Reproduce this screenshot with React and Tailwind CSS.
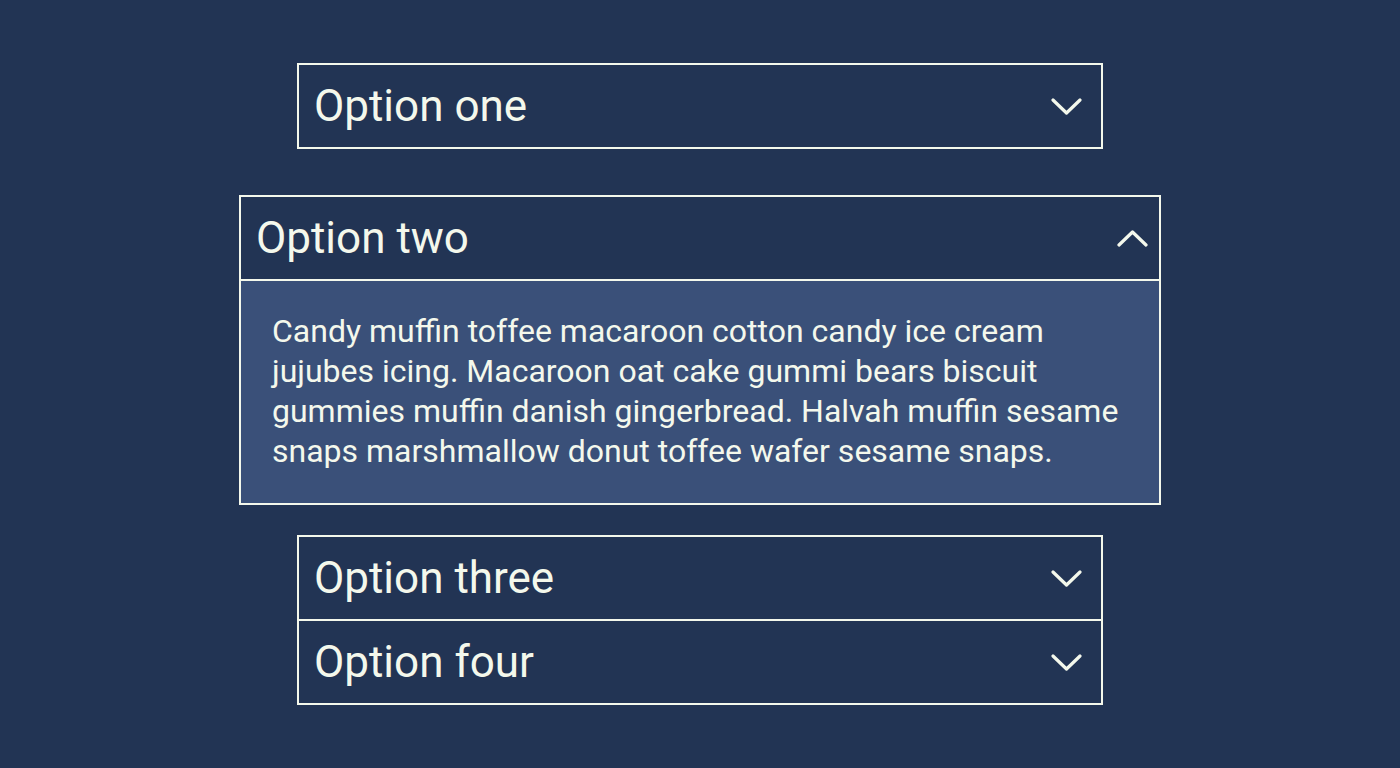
import { useState } from 'react';

// Accordion demo: four items, the second one open and wider than the rest
const ITEMS = [
  { id: 1, title: 'Option one' },
  {
    id: 2,
    title: 'Option two',
    body: 'Candy muffin toffee macaroon cotton candy ice cream jujubes icing. Macaroon oat cake gummi bears biscuit gummies muffin danish gingerbread. Halvah muffin sesame snaps marshmallow donut toffee wafer sesame snaps.',
  },
  { id: 3, title: 'Option three' },
  { id: 4, title: 'Option four' },
];

function Chevron({ up }) {
  return (
    <svg width="31" height="17" viewBox="0 0 31 17" fill="none" className="shrink-0">
      <path
        d={up ? 'M2 15L15.5 2L29 15' : 'M2 2L15.5 15L29 2'}
        stroke="#f4f8ec"
        strokeWidth="3.2"
        strokeLinecap="round"
        strokeLinejoin="round"
      />
    </svg>
  );
}

function Item({ item, open, onToggle, className }) {
  return (
    <div className={`border-2 border-[#f4f8ec] ${open ? 'w-[922px]' : 'w-[806px]'} ${className}`}>
      <button
        onClick={onToggle}
        className={`w-full flex items-center justify-between pl-[15px] text-left ${open ? 'h-[84px] pr-[11px] border-b-2 border-[#f4f8ec]' : 'h-[82px] pr-[19px]'}`}
      >
        <span className="text-[44px] leading-none text-[#f4f8ec]">{item.title}</span>
        <Chevron up={open} />
      </button>
      {open && (
        <div className="bg-[#3a5079] pl-[31px] pr-[30px] pt-[30px] pb-[32px]">
          <p className="text-[32px] leading-[40px] text-[#f4f8ec]">{item.body}</p>
        </div>
      )}
    </div>
  );
}

export default function App() {
  const [openId, setOpenId] = useState(2);

  return (
    <div
      className="w-full min-h-[768px] bg-[#223454] flex flex-col items-center pt-[63px]"
      style={{ fontFamily: 'Roboto, "Noto Sans", sans-serif' }}
    >
      {ITEMS.map((item, i) => (
        <Item
          key={item.id}
          item={item}
          open={openId === item.id}
          onToggle={() => setOpenId(openId === item.id ? null : item.id)}
          className={i === 1 ? 'mt-[46px]' : i === 2 ? 'mt-[30px]' : i === 3 ? '-mt-[2px]' : ''}
        />
      ))}
    </div>
  );
}
